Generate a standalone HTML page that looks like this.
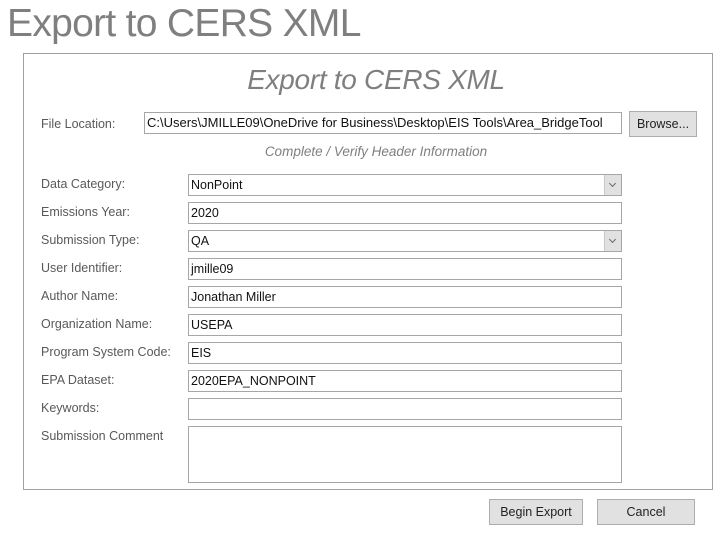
<!DOCTYPE html>
<html><head><style>
body{margin:0;width:724px;height:536px;background:#fff;position:relative;overflow:hidden;font-family:"Liberation Sans",sans-serif;}
.a{position:absolute;}
.t{left:7px;top:2px;font-size:39px;color:#7f7f7f;letter-spacing:-0.7px;}
.panel{left:23px;top:53px;width:688px;height:435px;border:1px solid #a0a0a0;}
.h{left:0;width:724px;top:64px;text-align:center;font-size:28px;font-style:italic;color:#7f7f7f;padding-left:14px;letter-spacing:-0.3px;}
.sub{left:0;width:724px;top:144px;text-align:center;font-size:13.5px;font-style:italic;color:#7f7f7f;padding-left:14px;}
.l{left:41px;font-size:12.5px;color:#595959;}
.f{left:188px;width:430px;height:20px;border:1px solid #a6a6a6;font-size:12.5px;color:#111;line-height:20px;padding-left:2px;box-sizing:content-box;white-space:nowrap;overflow:hidden;}
.dd{position:absolute;right:0;top:0;width:16px;height:20px;background:#e1e1e1;border-left:1px solid #c8c8c8;}
.dd:after{content:"";position:absolute;left:5px;top:6px;width:4px;height:4px;border-right:1px solid #666;border-bottom:1px solid #666;transform:rotate(45deg);}
.b{background:#e1e1e1;border:1px solid #adadad;font-size:12.5px;color:#222;text-align:center;box-sizing:border-box;}
</style></head><body>
<div class="a t">Export to CERS XML</div>
<div class="a panel"></div>
<div class="a h">Export to CERS XML</div>
<div class="a l" style="top:117px">File Location:</div>
<div class="a f" style="left:144px;top:112px;width:474px;font-size:13px;">C:\Users\JMILLE09\OneDrive for Business\Desktop\EIS Tools\Area_BridgeTool</div>
<div class="a b" style="left:629px;top:111px;width:68px;height:26px;line-height:24px;">Browse...</div>
<div class="a sub">Complete / Verify Header Information</div>

<div class="a l" style="top:177px">Data Category:</div>
<div class="a f" style="top:174px">NonPoint<div class="dd"></div></div>
<div class="a l" style="top:205px">Emissions Year:</div>
<div class="a f" style="top:202px">2020</div>
<div class="a l" style="top:233px">Submission Type:</div>
<div class="a f" style="top:230px">QA<div class="dd"></div></div>
<div class="a l" style="top:261px">User Identifier:</div>
<div class="a f" style="top:258px">jmille09</div>
<div class="a l" style="top:289px">Author Name:</div>
<div class="a f" style="top:286px">Jonathan Miller</div>
<div class="a l" style="top:317px">Organization Name:</div>
<div class="a f" style="top:314px">USEPA</div>
<div class="a l" style="top:345px">Program System Code:</div>
<div class="a f" style="top:342px">EIS</div>
<div class="a l" style="top:373px">EPA Dataset:</div>
<div class="a f" style="top:370px">2020EPA_NONPOINT</div>
<div class="a l" style="top:401px">Keywords:</div>
<div class="a f" style="top:398px"></div>
<div class="a l" style="top:429px">Submission Comment</div>
<div class="a f" style="top:426px;height:55px"></div>

<div class="a b" style="left:489px;top:499px;width:94px;height:26px;line-height:24px;">Begin Export</div>
<div class="a b" style="left:597px;top:499px;width:98px;height:26px;line-height:24px;">Cancel</div>
</body></html>
